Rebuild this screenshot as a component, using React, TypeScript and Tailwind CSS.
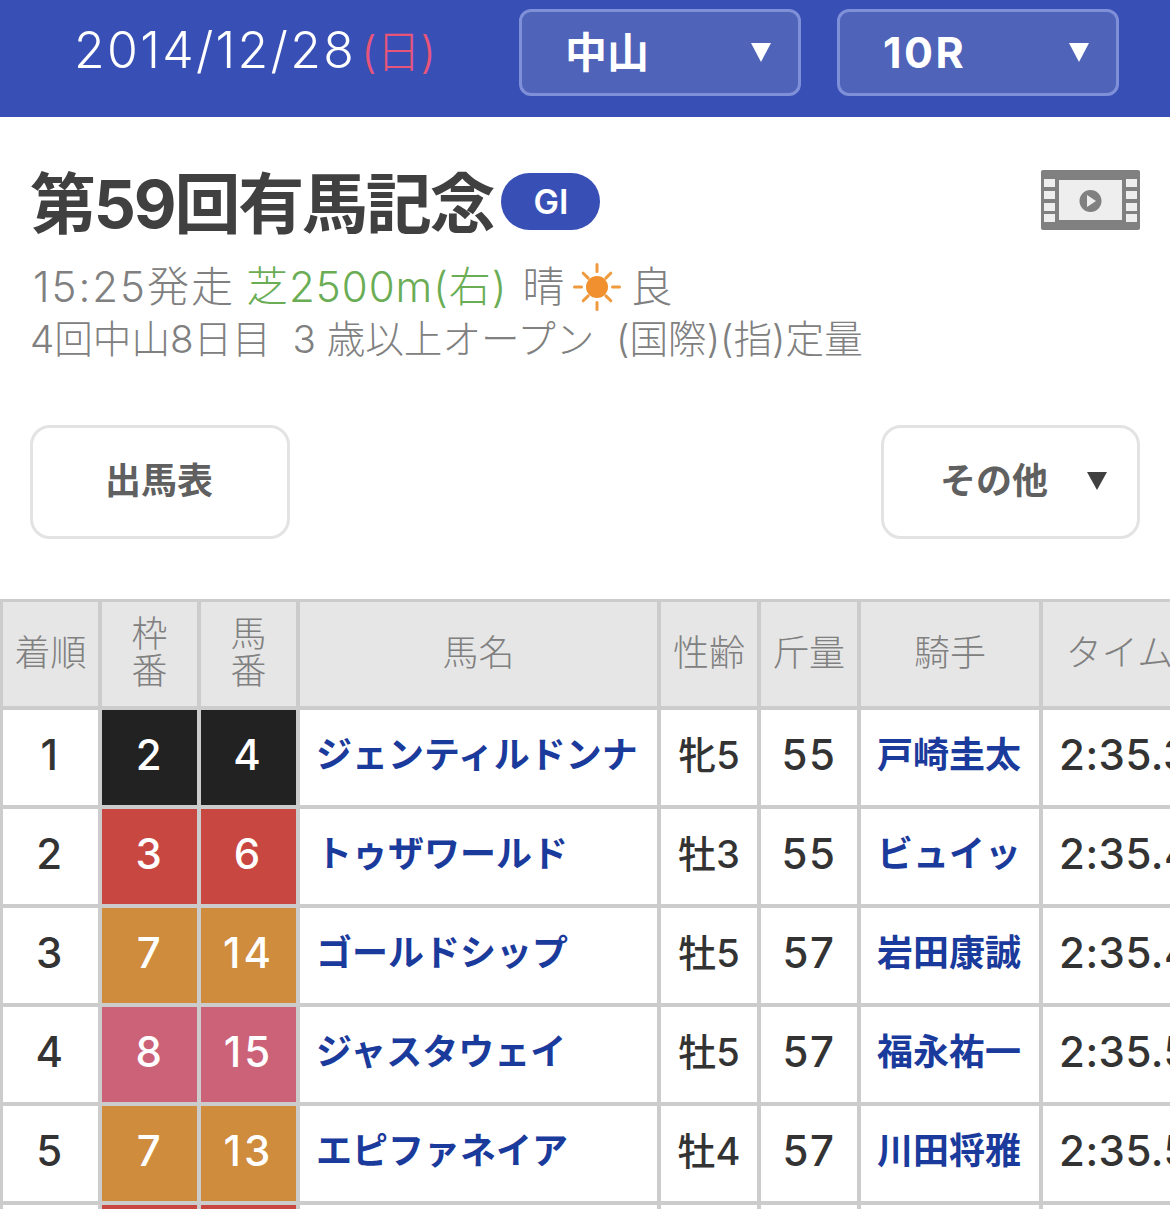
const rows = [
  { pos: '1', frame: '2', num: '4', color: 'bg-[#222222]', horse: 'ジェンティルドンナ', age: '牝5', weight: '55', jockey: '戸崎圭太', time: '2:35.3' },
  { pos: '2', frame: '3', num: '6', color: 'bg-[#c94741]', horse: 'トゥザワールド', age: '牡3', weight: '55', jockey: 'ビュイッ', time: '2:35.4' },
  { pos: '3', frame: '7', num: '14', color: 'bg-[#cf8c3c]', horse: 'ゴールドシップ', age: '牡5', weight: '57', jockey: '岩田康誠', time: '2:35.4' },
  { pos: '4', frame: '8', num: '15', color: 'bg-[#cc6278]', horse: 'ジャスタウェイ', age: '牡5', weight: '57', jockey: '福永祐一', time: '2:35.5' },
  { pos: '5', frame: '7', num: '13', color: 'bg-[#cf8c3c]', horse: 'エピファネイア', age: '牡4', weight: '57', jockey: '川田将雅', time: '2:35.5' },
  { pos: '', frame: '', num: '', color: 'bg-[#c94741]', horse: '', age: '', weight: '', jockey: '', time: '' },
];

const font = "font-['Inter','Noto_Sans_CJK_JP',sans-serif]";

function Caret({ w, h, className }: { w: number; h: number; className: string }) {
  return (
    <svg width={w} height={h} viewBox={`0 0 ${w} ${h}`} className={className}>
      <path d={`M0 0 H${w} L${w / 2} ${h} Z`} fill="currentColor" />
    </svg>
  );
}

function Select({ label, wide }: { label: string; wide?: boolean }) {
  return (
    <div className="flex h-[87px] w-[282px] items-center justify-between rounded-[12px] border-[3px] border-[#7f8fd8] bg-[#4f63b9] pl-[43px] pr-[27px]">
      <span className={`text-[42px] font-bold leading-none text-white ${wide ? 'text-[43px] tracking-[2.5px]' : ''}`}>{label}</span>
      <Caret w={20} h={19} className="text-white" />
    </div>
  );
}

function FilmIcon() {
  return (
    <svg width="99" height="60" viewBox="0 0 99 60">
      <rect width="99" height="60" rx="2" fill="#808080" />
      <rect x="18" y="10" width="63" height="40" fill="#eeeeee" />
      {[9, 21, 33, 44].map((y) => (
        <g key={y}>
          <rect x="3" y={y} width="11" height="8" fill="#eeeeee" />
          <rect x="85" y={y} width="11" height="8" fill="#eeeeee" />
        </g>
      ))}
      <circle cx="49.5" cy="31" r="11" fill="#808080" />
      <path d="M46 25 L55 31 L46 37 Z" fill="#eeeeee" />
    </svg>
  );
}

function Sun() {
  const rays = [0, 45, 90, 135, 180, 225, 270, 315];
  return (
    <svg width="50" height="50" viewBox="0 0 50 50" className="ml-[7px] mr-[9px]">
      {rays.map((r) => (
        <rect key={r} x="23.5" y={r % 90 === 0 ? 1 : 4} width="3" height="10" rx="1.5" fill="#f09a3e" transform={`rotate(${r} 25 25)`} />
      ))}
      <circle cx="25" cy="25" r="11" fill="#f0902e" />
    </svg>
  );
}

export default function App() {
  return (
    <div className={`h-[1209px] w-[1170px] overflow-hidden bg-white ${font}`}>
      <header className="flex h-[117px] items-start bg-[#3850b5] pt-[9px]">
        <div className="mt-[11px] w-[519px] pl-[74px] text-[50px] font-light leading-[60px] tracking-[2.3px] text-white">
          2014/12/28<span className="ml-[5px] text-[44px] tracking-[0px] text-[#e8557a]">(日)</span>
        </div>
        <div className="flex gap-[36px]">
          <Select label="中山" />
          <Select label="10R" wide />
        </div>
      </header>

      <section className="relative px-[30px] pt-[51px]">
        <div className="flex h-[64px] items-center">
          <h1 className="relative top-[4px] text-[66px] font-bold leading-none tracking-[-2.2px] text-[#404040]">第59回有馬記念</h1>
          <span className="relative top-[1px] ml-[8px] flex h-[57px] w-[99px] items-center justify-center rounded-full bg-[#3850b5] text-[34px] font-semibold text-white">GI</span>
          <div className="ml-auto">
            <FilmIcon />
          </div>
        </div>
        <div className="mt-[30px] flex h-[50px] items-center pl-[3px] text-[42px] font-light leading-none text-[#808080]">
          <span className="tracking-[2px]">15:25発走</span>
          <span className="ml-[11px] tracking-[1px] text-[#6aad55]">芝2500m(右)</span>
          <span className="ml-[15px]">晴</span>
          <Sun />
          <span>良</span>
        </div>
        <div className="mt-[2px] whitespace-pre text-[38.6px] font-light leading-[50px] text-[#808080]">
          4回中山8日目  3 歳以上オープン  (国際)(指)定量
        </div>

        <div className="mt-[61px] flex items-center justify-between">
          <div className="flex h-[114px] w-[260px] items-center justify-center rounded-[20px] border-[3px] border-[#e3e3e3] pb-[2px] pr-[2px] text-[36px] font-bold text-[#606060]">
            出馬表
          </div>
          <div className="flex h-[114px] w-[259px] items-center justify-between rounded-[20px] border-[3px] border-[#e3e3e3] pb-[2px] pl-[56px] pr-[30px] text-[36px] font-bold text-[#606060]">
            <span>その他</span>
            <Caret w={20} h={18} className="text-[#404040]" />
          </div>
        </div>
      </section>

      <div className="mt-[60px] w-[1200px] bg-[#cccccc] py-[3px] pl-[3px]">
        <table className="w-[1197px] table-fixed border-separate border-spacing-0">
          <colgroup>
            <col className="w-[99px]" />
            <col className="w-[99px]" />
            <col className="w-[99px]" />
            <col className="w-[361px]" />
            <col className="w-[100px]" />
            <col className="w-[100px]" />
            <col className="w-[182px]" />
            <col className="w-[157px]" />
          </colgroup>
          <thead>
            <tr className="text-[36px] font-light leading-[37px] text-[#808080]">
              {['着順', '枠\n番', '馬\n番', '馬名', '性齢', '斤量', '騎手', 'タイム'].map((h) => (
                <th key={h} className="h-[108px] whitespace-pre border-b-[4px] border-r-[4px] border-[#cccccc] bg-[#e6e6e6] p-0 pb-[2px] text-center font-light">
                  {h}
                </th>
              ))}
            </tr>
          </thead>
          <tbody>
            {rows.map((r, i) => (
              <tr key={i} className="text-[42px] font-medium leading-none tracking-[1.5px] text-[#333333]">
                <td className="h-[99px] border-b-[4px] border-r-[4px] border-[#cccccc] bg-white p-0 pb-[6px] pr-[1px] text-center">{r.pos}</td>
                <td className={`border-b-[4px] border-r-[4px] border-[#cccccc] p-0 pb-[6px] text-center text-white ${r.color}`}>{r.frame}</td>
                <td className={`border-b-[4px] border-r-[4px] border-[#cccccc] p-0 pb-[6px] text-center tracking-[3px] text-white ${r.color}`}>{r.num}</td>
                <td className="whitespace-nowrap border-b-[4px] border-r-[4px] border-[#cccccc] bg-white p-0 pb-[6px] pl-[16px] text-[36px] font-bold tracking-normal text-[#1a3a9c]">{r.horse}</td>
                <td className="border-b-[4px] border-r-[4px] border-[#cccccc] bg-white p-0 pb-[6px] text-center text-[38px] tracking-normal">{r.age}</td>
                <td className="border-b-[4px] border-r-[4px] border-[#cccccc] bg-white p-0 pb-[6px] text-center">{r.weight}</td>
                <td className="whitespace-nowrap border-b-[4px] border-r-[4px] border-[#cccccc] bg-white p-0 pb-[6px] pr-[2px] text-center text-[36px] font-bold tracking-normal text-[#1a3a9c]">{r.jockey}</td>
                <td className="whitespace-nowrap border-b-[4px] border-r-[4px] border-[#cccccc] bg-white p-0 pb-[6px] pl-[16px] tracking-[0.5px]">{r.time}</td>
              </tr>
            ))}
          </tbody>
        </table>
      </div>
    </div>
  );
}
